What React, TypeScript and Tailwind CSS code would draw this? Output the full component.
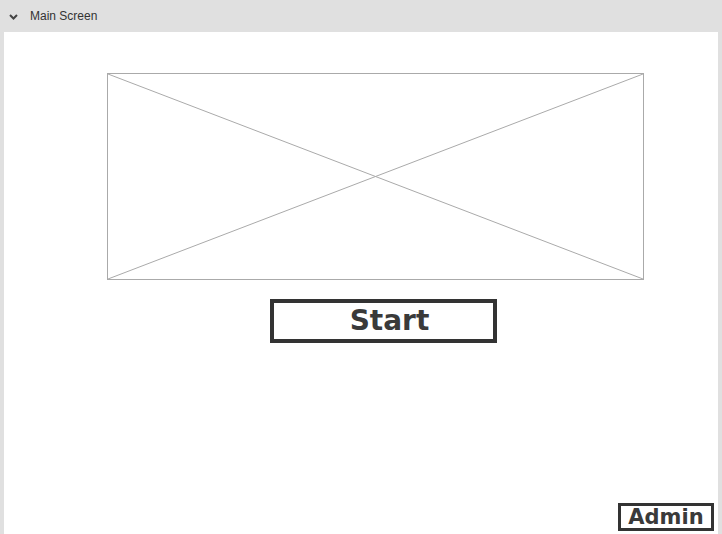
import React from 'react';

export default function App() {
  return (
    <div className="flex h-[534px] w-[722px] flex-col overflow-hidden bg-[#e0e0e0]">
      <div className="flex h-8 shrink-0 items-center gap-[12px] pl-[9px] font-['Liberation_Sans',Arial,sans-serif] text-[12px] text-[#333]">
        <svg width="9" height="6" viewBox="0 0 9 6" className="mt-[1px]">
          <path d="M1 1l3.5 3.5L8 1" fill="none" stroke="#444" strokeWidth="2" />
        </svg>
        <span className="-mt-[1px]">Main Screen</span>
      </div>
      <div className="mx-1 flex flex-1 flex-col bg-white font-['DejaVu_Sans',sans-serif]">
        <div className="ml-[103px] mt-[41px] h-[207px] w-[537px] border border-[#aaa]">
          <svg width="100%" height="100%" viewBox="0 0 535 205" preserveAspectRatio="none">
            <line x1="0" y1="0" x2="535" y2="205" stroke="#aaa" strokeWidth="1" />
            <line x1="535" y1="0" x2="0" y2="205" stroke="#aaa" strokeWidth="1" />
          </svg>
        </div>
        <div className="ml-[266px] mt-[19px] flex h-[44px] w-[227px] items-center justify-center border-4 border-[#333] pl-3 text-[28px] font-bold text-[#3a3a3a]">
          Start
        </div>
        <div className="flex-1" />
        <div className="mb-[3px] mr-1 flex justify-end">
          <div className="flex h-[28px] w-[96px] items-center justify-center border-[3px] border-[#333] text-[21px] font-bold leading-none text-[#3a3a3a]">
            Admin
          </div>
        </div>
      </div>
    </div>
  );
}
